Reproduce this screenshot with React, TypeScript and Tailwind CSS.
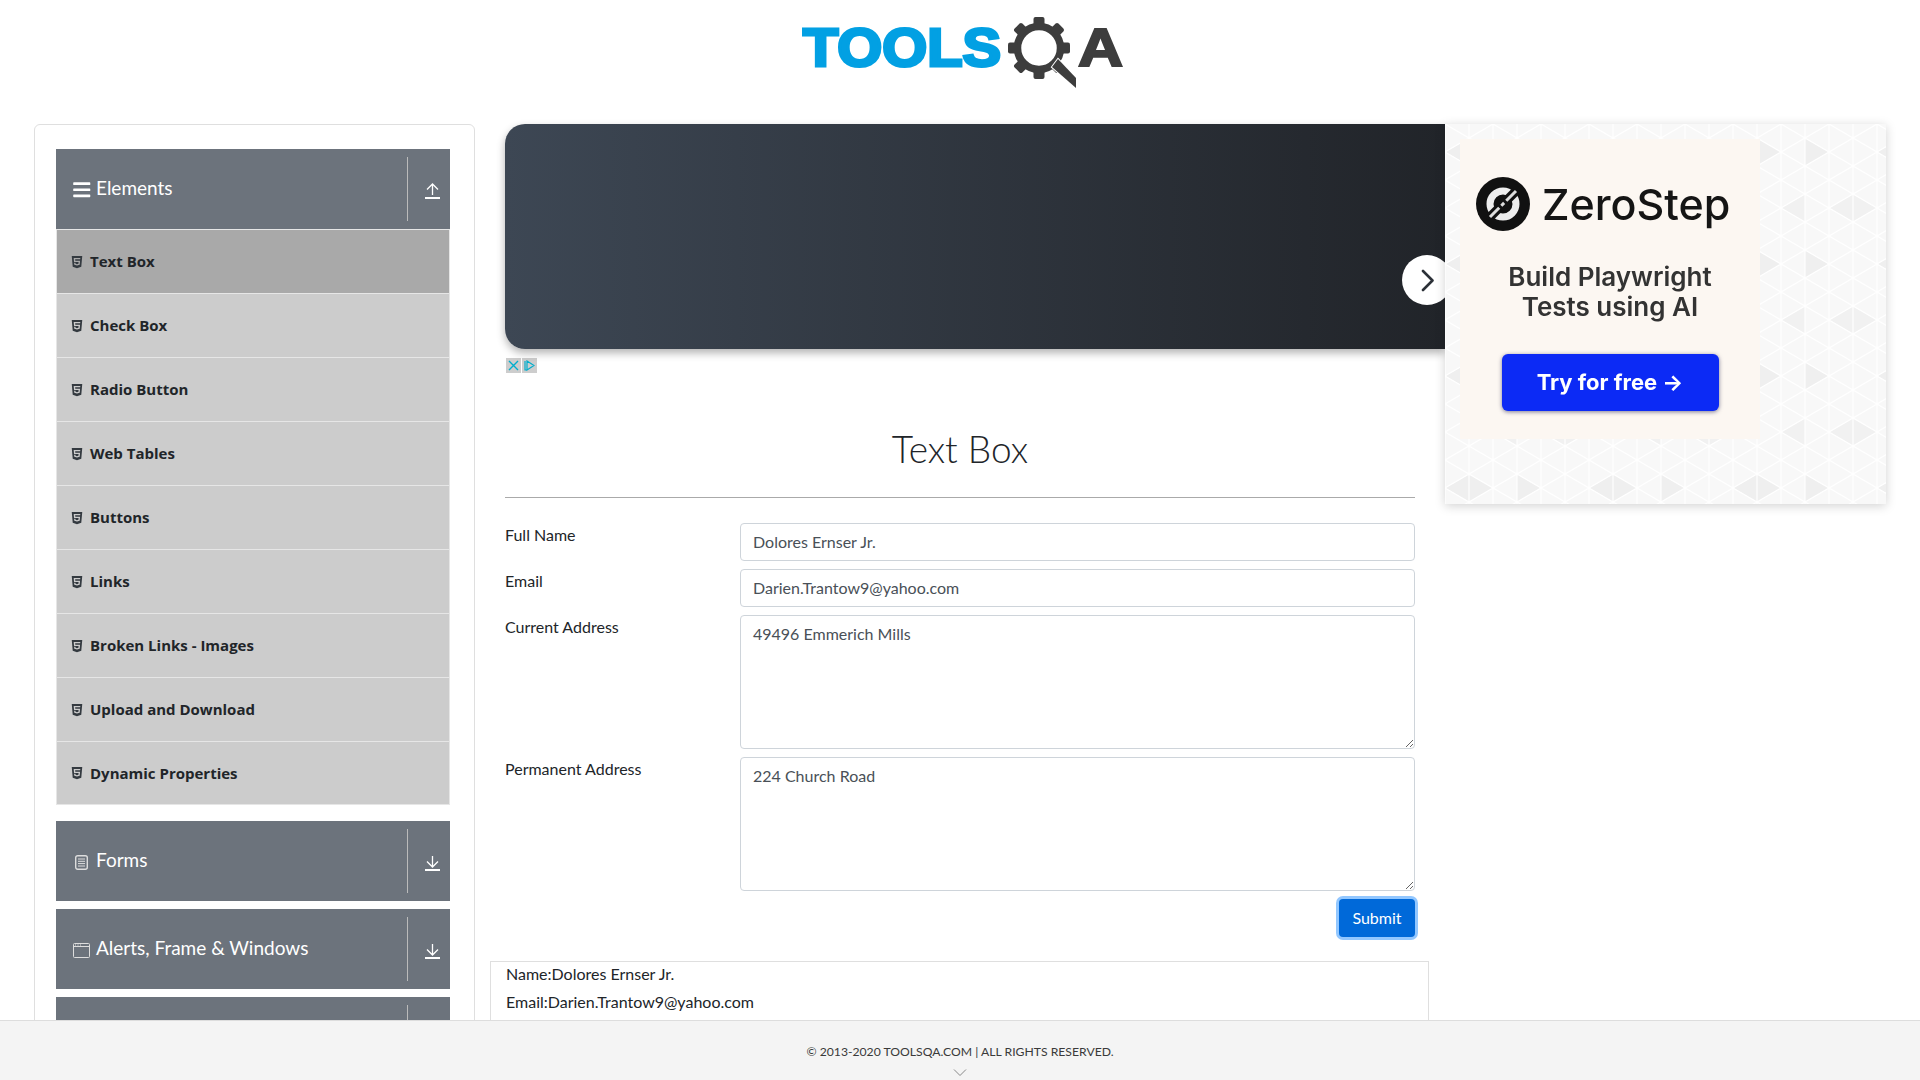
import { FaBars, FaHtml5 } from 'react-icons/fa';

const menuItems = [
  'Text Box',
  'Check Box',
  'Radio Button',
  'Web Tables',
  'Buttons',
  'Links',
  'Broken Links - Images',
  'Upload and Download',
  'Dynamic Properties',
];

// triangle grid behind the ad, columns every 24px
const gridLines = (() => {
  let d = '';
  for (let x = 0; x <= 144; x += 24) d += `M${x} 0V112`;
  for (let y = -112; y <= 112; y += 28) {
    d += `M0 ${y}L144 ${y + 84}`;
    d += `M0 ${y + 84}L144 ${y}`;
  }
  return d;
})();

function ArrowIcon({ up }: { up?: boolean }) {
  return (
    <svg width="15" height="16" viewBox="0 0 15 16" fill="none" stroke="#fff" strokeWidth="1.3" className="mt-1">
      <path d="M0 15h15" strokeWidth="2" />
      {up ? <path d="M7.5 12V1M2 6.5L7.5 1L13 6.5" /> : <path d="M7.5 1V12M2 6.5L7.5 12L13 6.5" />}
    </svg>
  );
}

function FormIcon() {
  return (
    <svg width="13" height="15" viewBox="0 0 13 15" fill="none" stroke="#ddd" className="ml-[2px] mr-[8px] mt-[2px]">
      <rect x="0.7" y="0.7" width="11.6" height="13.6" rx="2" strokeWidth="1.4" />
      <path d="M3 4h7M3 6.3h7M3 8.6h7M3 11h7" strokeWidth="1" />
    </svg>
  );
}

function WindowIcon() {
  return (
    <svg width="17" height="15" viewBox="0 0 17 15" fill="none" stroke="#ddd" className="mr-[6px] mt-[2px]">
      <rect x="0.5" y="0.5" width="16" height="14" rx="1" />
      <path d="M0.5 3.5h16" />
      <path d="M2 2h1M4.5 2h1M7 2h1" strokeWidth="1" />
    </svg>
  );
}

function GroupHeader({ title, icon, up }: { title: string; icon: React.ReactNode; up?: boolean }) {
  return (
    <div className="flex h-20 w-[394px] items-center bg-[#6c737c] pl-[17px] text-white">
      {icon}
      <span className="-mt-[2px] flex-1 text-[19px] font-normal">{title}</span>
      <div className="flex h-16 w-[43px] items-center justify-center border-l border-[#bbbbbb] pl-[6px]">
        <ArrowIcon up={up} />
      </div>
    </div>
  );
}

function Sidebar() {
  return (
    <div className="h-[1000px] w-[441px] shrink-0 rounded-md border border-[#dfdfdf] pl-[21px] pt-[24px]">
      <GroupHeader title="Elements" up icon={<FaBars className="-ml-[1px] mr-[4.5px] mt-[2px] text-[19.5px] text-white" />} />
      <ul className="mb-4 w-[394px]">
        {menuItems.map((item, i) => (
          <li
            key={item}
            className={`flex h-16 items-center border border-b-0 border-[#e6e6e6] pl-[13px] font-['Open_Sans'] text-[15px] font-bold text-[#212529] last:border-b ${
              i === 0 ? 'bg-[#a9a9a9]' : 'bg-[#cccccc]'
            }`}
          >
            <FaHtml5 className="mr-[6px] text-[14px] text-[#343a40]" />
            {item}
          </li>
        ))}
      </ul>
      <div className="flex flex-col gap-2">
        <GroupHeader title="Forms" icon={<FormIcon />} />
        <GroupHeader title="Alerts, Frame & Windows" icon={<WindowIcon />} />
        <GroupHeader title="Widgets" icon={<FaBars className="mr-[6px] text-[17px] text-white" />} />
      </div>
    </div>
  );
}

function Logo() {
  return (
    <svg width="340" height="92" viewBox="0 0 340 92">
      <text
        x="12"
        y="66"
        fill="#02a0e3"
        stroke="#02a0e3"
        strokeWidth="3"
        fontFamily="Liberation Sans"
        fontWeight="700"
        fontSize="53"
        textLength="198"
        lengthAdjust="spacingAndGlyphs"
      >
        TOOLS
      </text>
      <g transform="translate(248 48)" fill="#3d3d3d">
        <circle r="21.5" fill="none" stroke="#3d3d3d" strokeWidth="7.5" />
        {[0, 45, 90, 135, 180, 225, 270, 315].map((a) => (
          <rect key={a} x="-5.5" y="-31" width="11" height="10" rx="2" transform={`rotate(${a})`} />
        ))}
      </g>
      <path d="M267 59L285 78V88L261 67Z" fill="#3d3d3d" stroke="#fff" strokeWidth="2" paintOrder="stroke" />
      <text
        x="287"
        y="66"
        fill="#3d3d3d"
        stroke="#3d3d3d"
        strokeWidth="2"
        fontFamily="Liberation Sans"
        fontWeight="700"
        fontSize="53"
        textLength="45"
        lengthAdjust="spacingAndGlyphs"
      >
        A
      </text>
    </svg>
  );
}

function TextField({ label, value }: { label: string; value: string }) {
  return (
    <div className="mb-2 flex">
      <label className="w-[235px]">{label}</label>
      <div className="flex h-[38px] flex-1 items-center rounded border border-[#ced4da] px-3 text-[#495057]">{value}</div>
    </div>
  );
}

function AreaField({ label, value }: { label: string; value: string }) {
  return (
    <div className="mb-2 flex">
      <label className="w-[235px]">{label}</label>
      <textarea
        readOnly
        value={value}
        className="h-[134px] flex-1 rounded border border-[#ced4da] px-3 py-[6px] text-[#495057] outline-none"
      />
    </div>
  );
}

function TextBoxForm() {
  return (
    <div className="w-[910px]">
      <h1 className="mt-[46px] pb-[18px] text-center text-[37px] font-light leading-[60px]">Text Box</h1>
      <div className="mb-[25px] border-t border-[#aaaaaa]" />
      <TextField label="Full Name" value="Dolores Ernser Jr." />
      <TextField label="Email" value="Darien.Trantow9@yahoo.com" />
      <AreaField label="Current Address" value="49496 Emmerich Mills" />
      <AreaField label="Permanent Address" value="224 Church Road" />
      <div className="flex justify-end">
        <button className="h-[38px] w-[76px] rounded bg-[#0069d9] text-white ring-[3px] ring-[#268fff80]">Submit</button>
      </div>
      <div className="-ml-[15px] mt-[24px] h-[200px] w-[939px] border border-[#dfdfdf] px-[15px]">
        <p className="mb-1">Name:Dolores Ernser Jr.</p>
        <p>Email:Darien.Trantow9@yahoo.com</p>
      </div>
    </div>
  );
}

function ZeroStepAd() {
  return (
    <div className="relative z-10 h-[380px] w-[441px] shrink-0 overflow-hidden bg-[#f8f8f8] pl-[15px] pt-[15px] shadow-[0_2px_10px_rgba(0,0,0,0.18)]">
      <svg className="absolute inset-0" width="441" height="380">
        <defs>
          <pattern id="tri" width="144" height="112" patternUnits="userSpaceOnUse">
            <path d="M0 28L24 14L48 28L24 42Z" fill="#efefef" />
            <path d="M48 84L72 70V98Z" fill="#f1f1f1" />
            <path d="M72 14L96 28L72 42Z" fill="#efefef" />
            <path d="M96 84L120 70L144 84L120 98Z" fill="#f1f1f1" />
            <path d={gridLines} stroke="#fff" strokeWidth="1.2" fill="none" />
          </pattern>
        </defs>
        <rect width="441" height="380" fill="url(#tri)" />
      </svg>
      <div className="relative flex h-[300px] w-[300px] flex-col items-center bg-[#fcf7f2] font-['Inter'] blur-[0.4px]">
        <div className="mt-[38px] flex items-center gap-[12px] self-start pl-[16px]">
          <svg width="54" height="54" viewBox="0 0 54 54">
            <circle cx="27" cy="27" r="27" fill="#111" />
            <circle cx="27" cy="27" r="13" fill="none" stroke="#eee" strokeWidth="7" />
            <path d="M11 43L43 11" stroke="#111" strokeWidth="9" />
            <path d="M14 40L40 14" stroke="#ddd" strokeWidth="3" strokeDasharray="13 3 4 3 14" />
          </svg>
          <span className="text-[43px] font-medium leading-none text-[#151515]">ZeroStep</span>
        </div>
        <p className="mt-[31px] text-center text-[26px] font-semibold leading-[30px] text-[#333333]">
          Build Playwright
          <br />
          Tests using AI
        </p>
        <button className="mt-[32px] h-[57px] w-[217px] rounded-[6px] bg-[#0c2af5] text-[22px] font-bold text-white shadow-[0_1px_4px_rgba(0,0,60,0.5)]">
          Try for free →
        </button>
      </div>
    </div>
  );
}

export default function App() {
  return (
    <div className="relative h-screen overflow-hidden bg-white font-['Lato','Liberation_Sans',sans-serif] text-base text-[#212529]">
      <header className="flex h-[124px] justify-center pl-[2px]">
        <div className="h-[92px]">
          <Logo />
        </div>
      </header>

      <div className="flex pl-[34px]">
        <Sidebar />
        <main className="ml-[30px] w-[940px] shrink-0">
          <div className="relative h-[225px] rounded-l-[20px] bg-gradient-to-r from-[#3d4754] to-[#212429] shadow-[0_4px_8px_rgba(0,0,0,0.3)]">
            <div className="absolute right-[-7px] top-[131px] flex h-[50px] w-[50px] items-center justify-center rounded-full bg-white">
              <svg width="13" height="23" viewBox="0 0 13 23" fill="none" stroke="#2c3138" strokeWidth="2.6" strokeLinecap="round" strokeLinejoin="round">
                <path d="M2 2L11.5 11.5L2 21" />
              </svg>
            </div>
          </div>
          <div className="ml-px mt-[9px] flex gap-px">
            <span className="flex h-[15px] w-[15px] items-center justify-center bg-[#cdcdcd]">
              <svg width="11" height="11" viewBox="0 0 11 11" fill="none" stroke="#00aecd" strokeWidth="1.4"><path d="M1 1L10 10M10 1L1 10" /></svg>
            </span>
            <span className="flex h-[15px] w-[15px] items-center justify-center bg-[#cdcdcd]">
              <svg width="11" height="11" viewBox="0 0 11 11" fill="none" stroke="#00aecd" strokeWidth="1.2"><path d="M1 1v9h2M3 1L10 5.5L3 10Z" /></svg>
            </span>
          </div>
          <TextBoxForm />
        </main>
        <ZeroStepAd />
      </div>

      <footer className="absolute inset-x-0 bottom-0 z-20 flex h-[60px] flex-col items-center border-t border-[#dddddd] bg-[#f4f4f4] pt-[22px] text-[12.2px] leading-[18px] text-[#3a3a3a]">
        <span>© 2013-2020 TOOLSQA.COM | ALL RIGHTS RESERVED.</span>
        <svg className="mt-[8px]" width="14" height="7" viewBox="0 0 14 7" fill="none" stroke="#888" strokeWidth="1"><path d="M1 0.5L7 6.5L13 0.5" /></svg>
      </footer>
    </div>
  );
}
